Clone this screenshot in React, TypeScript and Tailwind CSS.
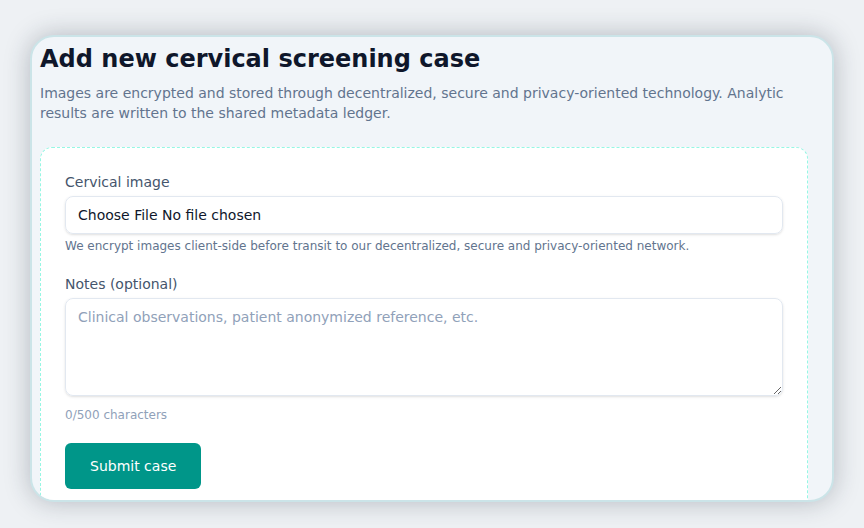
import { useState } from "react";

const MAX_NOTES = 500;

const App = () => {
  const [notes, setNotes] = useState("");

  return (
    <div
      className="min-h-screen bg-[#eef1f4] px-[30px] pt-[35px]"
      style={{ fontFamily: '"DejaVu Sans", "Noto Sans", sans-serif' }}
    >
      <div className="h-[467px] overflow-hidden rounded-3xl border-2 border-[#cbe4e8] bg-slate-100 pl-2 pr-6 pt-1.5 shadow-[0_0_26px_rgba(30,41,59,0.28)]">
        <h1 className="text-2xl font-bold text-slate-900">Add new cervical screening case</h1>
        <p className="mt-2 text-sm leading-5 text-slate-500">
          Images are encrypted and stored through decentralized, secure and privacy-oriented technology. Analytic
          results are written to the shared metadata ledger.
        </p>

        <form className="mt-6 rounded-xl border border-dashed border-teal-200 bg-white p-6">
          <div>
            <label className="mb-1 block text-sm leading-5 text-slate-600">Cervical image</label>
            <div className="rounded-lg border border-slate-200 px-3 py-2 text-sm leading-5 text-slate-900 shadow-sm">
              Choose File No file chosen
            </div>
            <p className="mt-1 text-xs leading-4 text-slate-500">
              We encrypt images client-side before transit to our decentralized, secure and privacy-oriented network.
            </p>
          </div>

          <div className="mt-5">
            <label className="mb-1 block text-sm leading-5 text-slate-600">Notes (optional)</label>
            <textarea
              rows={4}
              value={notes}
              maxLength={MAX_NOTES}
              onChange={(e) => setNotes(e.target.value)}
              placeholder="Clinical observations, patient anonymized reference, etc."
              className="block w-full rounded-lg border border-slate-200 px-3 py-2 text-sm leading-5 text-slate-900 shadow-sm outline-none placeholder:text-slate-400"
            />
            <p className="mt-[11px] text-xs leading-4 text-slate-400">
              {notes.length}/{MAX_NOTES} characters
            </p>
          </div>

          <button
            type="button"
            className="mt-5 rounded-md bg-teal-600 px-[25px] py-[13px] text-sm leading-5 text-white"
          >
            Submit case
          </button>
        </form>
      </div>
    </div>
  );
};

export default App;
